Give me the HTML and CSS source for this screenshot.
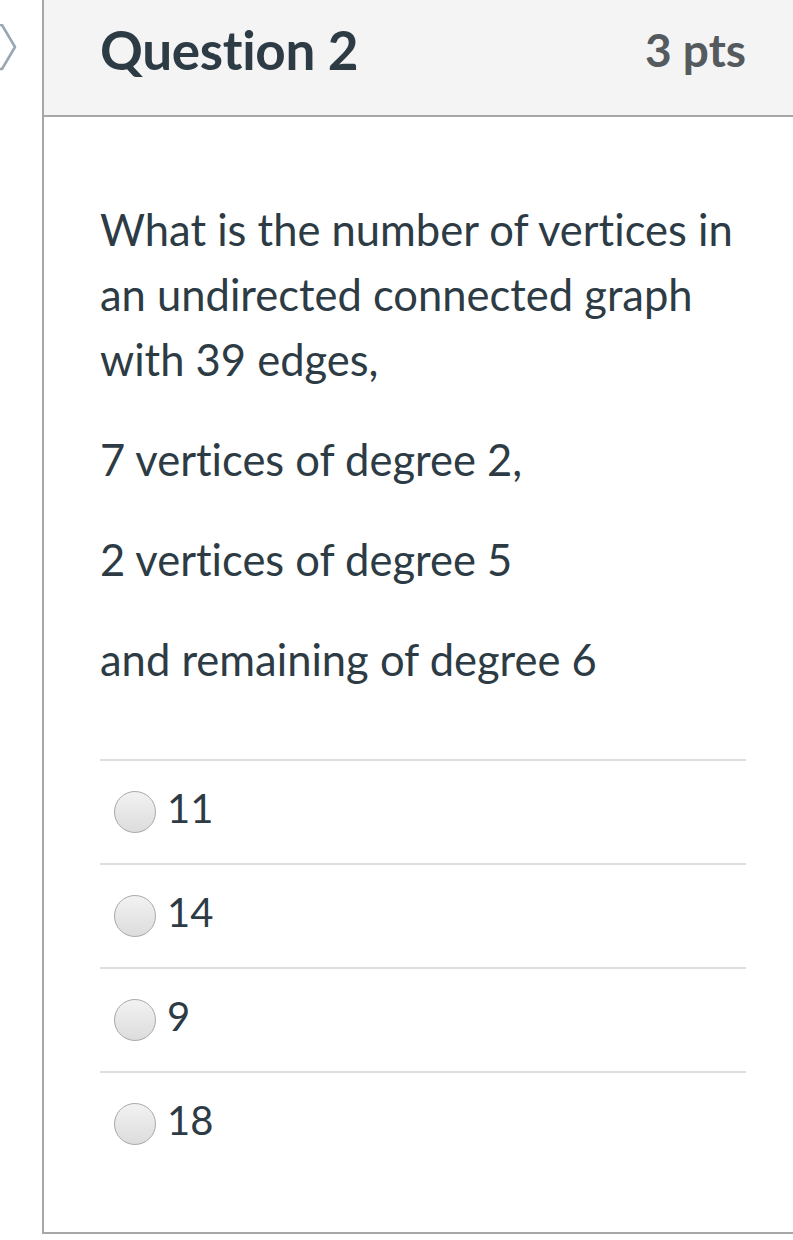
FILE: index.html
```html
<!DOCTYPE html>
<html>
<head>
<meta charset="utf-8">
<link rel="stylesheet" href="styles.css">
</head>
<body>
<div class="page">
  <svg class="nav-chevron" width="20" height="50" viewBox="0 0 20 50">
    <polyline points="-4,1 2,1 15,23 2,45 -4,45" fill="none" stroke="#9aa8b4" stroke-width="2.6" stroke-linejoin="round"/>
  </svg>
  <div class="card">
    <div class="card-header">
      <h2 class="q-title">Question 2</h2>
      <div class="q-pts">3 pts</div>
    </div>
    <div class="card-body">
      <p>What is the number of vertices in an undirected connected graph with 39 edges,</p>
      <p>7 vertices of degree 2,</p>
      <p>2 vertices of degree 5</p>
      <p>and remaining of degree 6</p>
      <div class="answers">
        <label class="answer"><span class="radio"></span><span class="answer-text">11</span></label>
        <label class="answer"><span class="radio"></span><span class="answer-text">14</span></label>
        <label class="answer"><span class="radio"></span><span class="answer-text">9</span></label>
        <label class="answer"><span class="radio"></span><span class="answer-text">18</span></label>
      </div>
    </div>
  </div>
</div>
</body>
</html>
```

FILE: styles.css
```css
html, body {
  margin: 0;
  padding: 0;
  background: #ffffff;
  overflow: hidden;
}
body {
  font-family: Lato, "Open Sans", sans-serif;
  font-variant-ligatures: none;
  color: #2d3b45;
  width: 793px;
  height: 1240px;
}
.page {
  position: relative;
  padding-left: 42px;
}
.nav-chevron {
  position: absolute;
  left: 0;
  top: 24px;
}
.card {
  border-left: 2px solid #a7a7a7;
  border-bottom: 2px solid #a7a7a7;
  height: 1234px;
  box-sizing: border-box;
  width: 780px;
}
.card-header {
  height: 99px;
  background: #f4f4f4;
  border-bottom: 2px solid #a7a7a7;
  display: flex;
  align-items: center;
  justify-content: space-between;
  padding: 0 76px 16px 56px;
  box-sizing: content-box;
}
.q-title {
  margin: 0;
  font-size: 53px;
  font-weight: 700;
  color: #2d3b45;
  letter-spacing: -0.3px;
}
.q-pts {
  font-size: 46px;
  font-weight: 700;
  color: #555a5e;
}
.card-body {
  padding: 80px 76px 0 56px;
}
.card-body p {
  margin: 0 0 35px 0;
  font-size: 43.5px;
  line-height: 65px;
}
.answers {
  margin-top: 67px;
}
.answer {
  display: flex;
  align-items: center;
  height: 102px;
  border-top: 2px solid #dedede;
  padding-left: 14px;
}
.radio {
  width: 40px;
  height: 40px;
  border-radius: 50%;
  border: 1px solid #a9a9a9;
  background: linear-gradient(#f2f2f2, #dcdcdc);
  margin-right: 11px;
  flex: none;
}
.answer-text {
  font-size: 40px;
  color: #2d3b45;
  padding-bottom: 8px;
}
```
